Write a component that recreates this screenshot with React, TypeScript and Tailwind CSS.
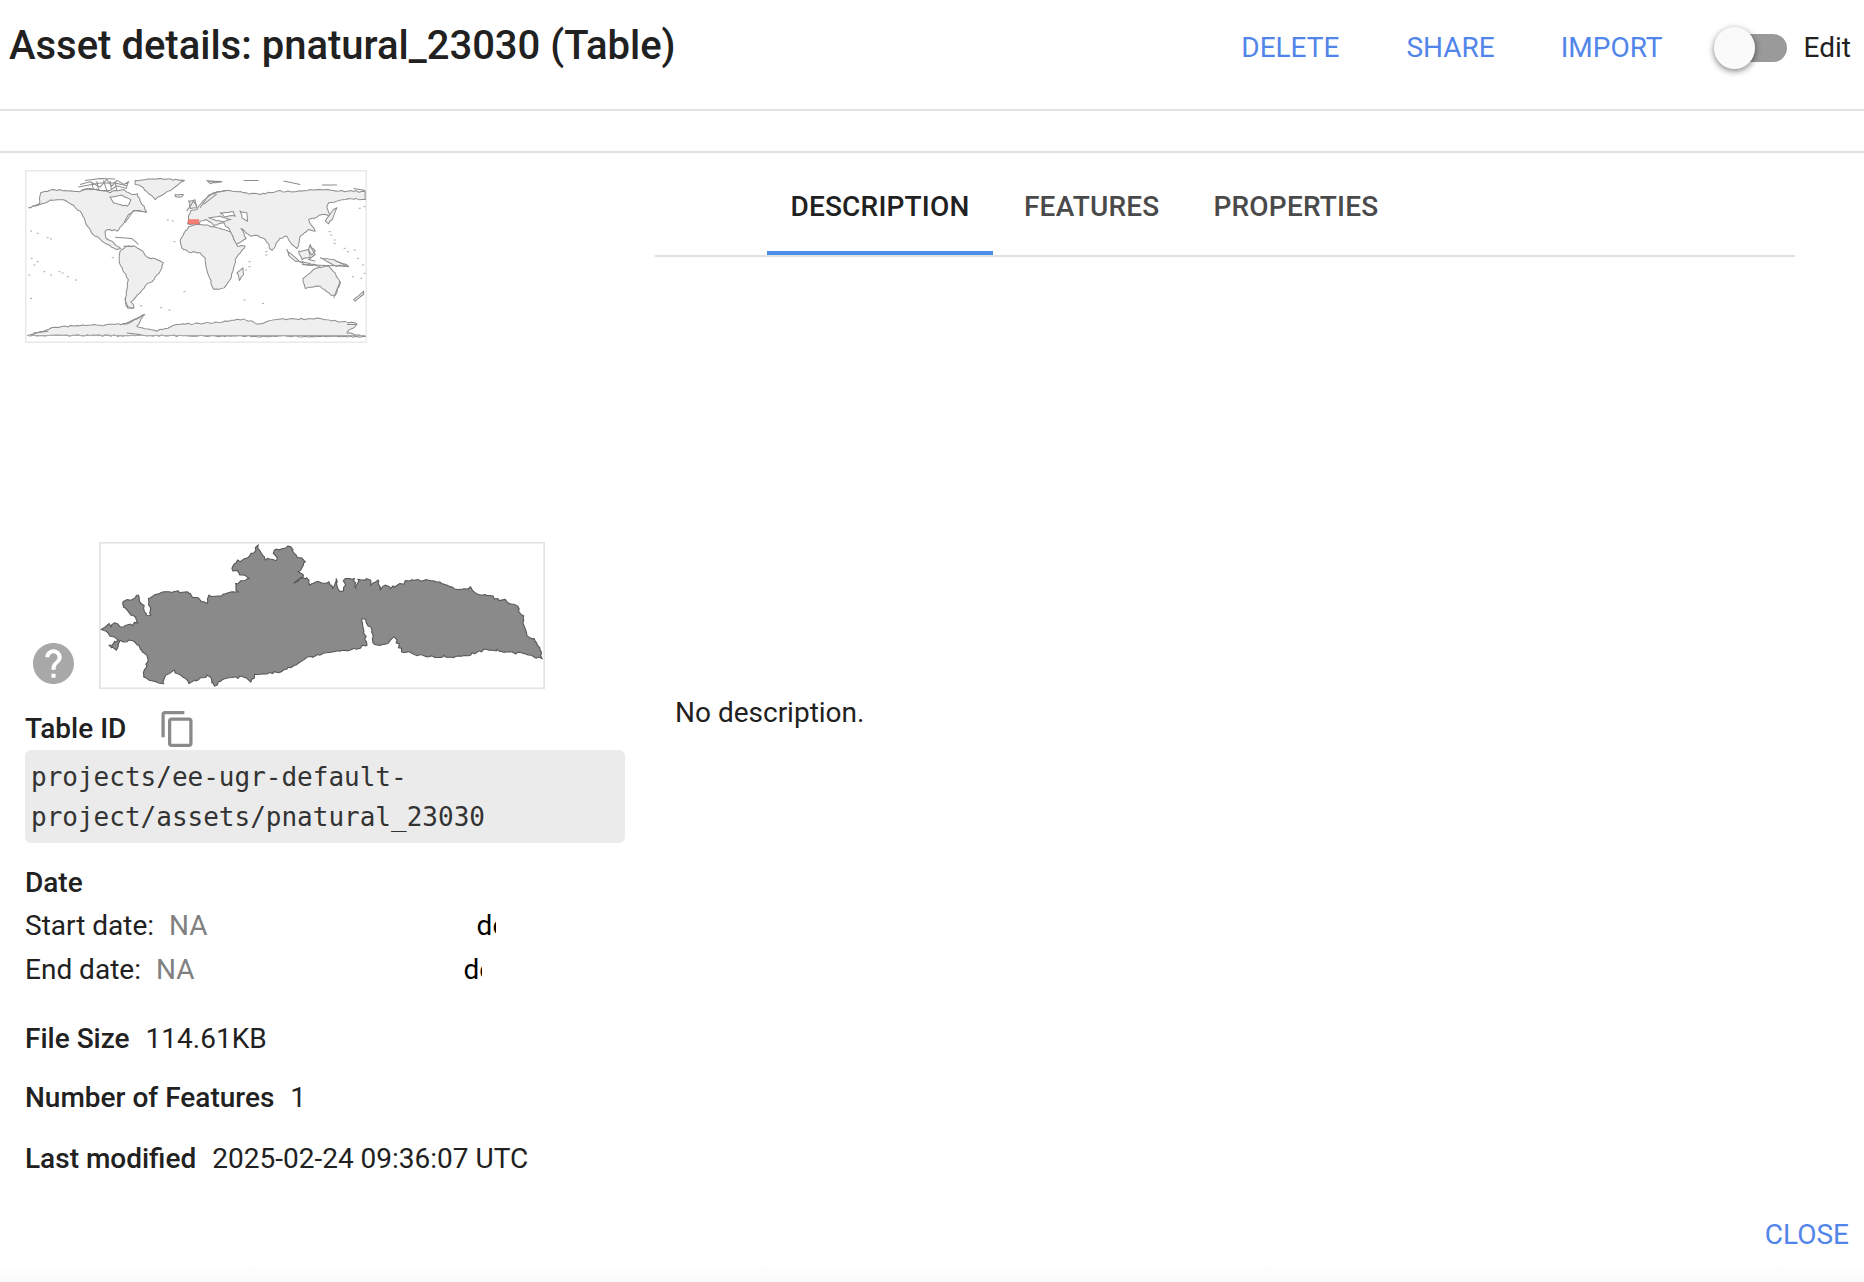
import React from 'react';

// outlines are traced by hand, roughen() adds the coastline wobble
function roughen(d: string, step: number, amp: number) {
  const nums = d.match(/-?\d+(\.\d+)?/g)!.map(Number);
  const pts: number[][] = [];
  for (let i = 0; i < nums.length; i += 2) pts.push([nums[i], nums[i + 1]]);
  let out = '';
  let n = 0;
  pts.forEach((p, i) => {
    const q = pts[(i + 1) % pts.length];
    const len = Math.hypot(q[0] - p[0], q[1] - p[1]);
    const parts = Math.max(1, Math.round(len / step));
    for (let k = 0; k < parts; k++) {
      n++;
      const t = k / parts;
      const off = k === 0 ? 0 : Math.sin(n * 12.9898) * 43758.5453;
      const r = off - Math.floor(off) - 0.5;
      const s = Math.sin(n * 78.233) * 12345.678;
      const r2 = s - Math.floor(s) - 0.5;
      const x = p[0] + (q[0] - p[0]) * t + (k === 0 ? 0 : r * amp);
      const y = p[1] + (q[1] - p[1]) * t + (k === 0 ? 0 : r2 * amp);
      out += `${n === 1 ? 'M' : 'L'}${x.toFixed(1)} ${y.toFixed(1)} `;
    }
  });
  return out + 'Z';
}

const land = [
  // north america
  'M85 170 L118 158 L122 125 L160 115 L205 120 L240 122 L262 112 L300 118 L330 125 L345 118 L372 116 L395 130 L412 128 L420 150 L432 165 L440 183 L408 178 L385 190 L372 215 L352 240 L330 235 L315 240 L318 262 L335 270 L362 292 L350 295 L322 280 L298 262 L278 250 L262 225 L240 180 L215 160 L190 146 L150 147 L125 158',
  // south america
  'M360 300 L378 286 L402 284 L420 295 L442 318 L470 325 L490 335 L478 365 L462 385 L435 405 L420 425 L405 440 L392 452 L402 470 L382 470 L375 445 L382 405 L385 385 L368 358 L358 335',
  // greenland
  'M405 88 L450 84 L500 84 L553 88 L535 100 L512 118 L490 130 L465 146 L445 128 L430 110 L405 100',
  // eurasia
  'M565 200 L572 178 L590 176 L602 158 L625 132 L650 122 L680 118 L730 125 L780 130 L830 120 L880 122 L930 115 L1000 118 L1095 122 L1095 145 L1045 142 L1010 150 L985 155 L980 170 L992 195 L965 190 L950 198 L925 205 L945 240 L925 235 L900 255 L890 292 L875 280 L860 255 L838 262 L815 298 L795 265 L765 252 L752 255 L722 232 L738 262 L705 280 L690 240 L672 215 L640 222 L618 205 L600 210 L598 218 L562 218',
  // africa
  'M540 270 L552 245 L566 226 L600 220 L640 226 L690 242 L712 285 L735 285 L705 325 L700 350 L688 388 L672 410 L640 414 L622 365 L615 320 L600 305 L565 302 L545 290',
  // australia
  'M908 382 L945 352 L965 348 L985 345 L998 360 L1020 395 L1005 432 L992 432 L960 405 L915 412',
  // antarctica
  'M82 552 L130 540 L165 528 L230 523 L300 522 L380 518 L432 490 L410 525 L470 540 L530 520 L640 515 L730 503 L778 518 L830 505 L960 502 L1070 518 L1040 545 L1095 556',
  // islands: madagascar, uk, iceland, japan, sumatra, borneo, new guinea, nz, novaya zemlya
  'M710 365 L728 350 L730 370 L718 388',
  'M565 150 L585 146 L590 170 L570 172',
  'M525 130 L550 130 L545 137 L525 136',
  'M975 210 L985 195 L1000 175 L1010 170 L1000 195 L985 218',
  'M860 295 L880 315 L905 335 L885 330 L865 312',
  'M895 300 L925 295 L930 318 L905 325',
  'M960 320 L1000 325 L1045 345 L1000 342',
  'M1060 445 L1090 420 L1090 430 L1065 450',
  'M620 88 L665 92 L630 98',
  'M930 280 L945 300 L935 312 L925 295',
  'M905 330 L960 345 L910 340',
];

// white holes: hudson bay, med, black sea, caspian
const water = [
  'M330 138 L365 132 L392 145 L382 165 L360 160 L340 155',
  'M625 200 L660 195 L690 205 L665 212 L640 205',
  'M660 185 L700 182 L705 195 L670 195',
  'M720 180 L740 185 L742 210 L725 200',
];

// canadian arctic and other small coast bits, drawn as open scribble
const arctic = [
  'M240 100 L270 92 L300 108 L320 85 L335 105 L350 88 L372 100 L385 92 L378 112 L350 104 L330 118 L300 118 L270 112 L245 118',
  'M235 108 L300 96 L345 96 L380 104',
  'M255 88 L300 82 L345 84',
  'M310 88 L320 118 M345 92 L350 118 M275 92 L280 115 M290 90 L296 118 M330 90 L334 116',
  'M625 90 L665 92 M730 88 L775 88 M850 90 L900 100 M965 102 L1010 102 M1060 112 L1095 118',
  'M560 180 L580 150 L590 165 M600 170 L620 140 L640 125 L680 118 M610 160 L650 128',
  'M930 285 L945 310 L925 325 L945 330 M905 340 L1040 345 M1010 330 L1045 348',
  'M375 440 L378 465 L400 472',
  'M345 258 L395 262 L415 280 M370 285 L400 285',
  'M375 215 L400 178 L440 183',
  'M100 545 L145 540 M370 520 L435 490 M380 545 L420 550 M1040 520 L1070 520',
  'M1020 390 L1000 440',
];

const islets = [
  [500, 205], [515, 208], [520, 270], [90, 238], [110, 245], [140, 258], [150, 262], [92, 320], [100, 340],
  [85, 370], [130, 360], [175, 360], [185, 364], [200, 375], [225, 385], [90, 440], [480, 468], [505, 475], [730, 445],
  [785, 455], [1055, 375], [1070, 320], [1000, 265], [1030, 290], [985, 240], [745, 330], [550, 420], [335, 318],
  [1000, 275], [1040, 300], [1060, 295], [1085, 340], [1090, 365], [1080, 380], [420, 462], [110, 330], [150, 370],
  [795, 310], [795, 300], [745, 345], [735, 355], [990, 250], [1075, 170], [1090, 165],
];

function WorldMap() {
  return (
    <svg viewBox="75 57 1025 518" className="w-[342px] h-[173px] block">
      <rect x="77" y="59" width="1021" height="514" fill="#fff" stroke="#eaeaea" strokeWidth="5" />
      <g fill="#efefef" stroke="#8c8c8c" strokeWidth="3" strokeLinejoin="round">
        {land.map((d, i) => (
          <path key={i} d={roughen(d, 9, 5)} />
        ))}
      </g>
      <g fill="#fff" stroke="#8c8c8c" strokeWidth="3">
        {water.map((d, i) => (
          <path key={i} d={roughen(d, 8, 4)} />
        ))}
      </g>
      <g fill="none" stroke="#8c8c8c" strokeWidth="3">
        {arctic.map((d, i) => (
          <path key={i} d={d} />
        ))}
      </g>
      <g fill="#aaa">
        {islets.map(([x, y], i) => (
          <rect key={i} x={x} y={y} width="6" height="3" />
        ))}
      </g>
      <rect x="565" y="206" width="31" height="12" fill="#f67f76" stroke="#f0645a" strokeWidth="2" />
      <path d="M82 553 H1095" stroke="#aaa" strokeWidth="3" />
    </svg>
  );
}

const regionOutline =
  'M278 328 L300 310 L305 320 L315 308 L330 320 L378 308 L372 290 L360 285 L340 262 L338 245 L360 240 L380 225 L395 265 L402 285 L415 285 L408 235 L450 215 L490 212 L520 220 L540 232 L570 250 L575 225 L600 228 L640 215 L655 215 L648 190 L685 175 L660 165 L638 145 L650 128 L685 110 L710 75 L730 120 L745 118 L760 122 L755 90 L785 85 L800 80 L815 105 L840 125 L820 155 L835 165 L808 190 L830 172 L850 180 L852 195 L870 185 L905 185 L915 205 L925 175 L932 210 L945 212 L950 175 L975 175 L980 205 L985 178 L1020 180 L1020 195 L1040 180 L1045 210 L1060 195 L1075 205 L1100 190 L1150 178 L1200 185 L1260 208 L1295 200 L1315 222 L1370 235 L1425 258 L1440 295 L1450 345 L1470 355 L1490 395 L1492 415 L1440 400 L1400 395 L1340 388 L1270 408 L1170 408 L1105 395 L1085 350 L1060 372 L1030 372 L1020 320 L997 295 L1000 325 L1010 375 L950 390 L880 405 L845 410 L810 435 L750 460 L700 462 L690 485 L670 470 L620 475 L590 497 L570 465 L520 490 L480 450 L455 465 L450 490 L395 470 L405 410 L370 365 L330 360 L320 390 L300 375 L325 360';

function RegionShape() {
  return (
    <svg viewBox="272 66 1228 440" preserveAspectRatio="none" className="w-[446px] h-[147px] block">
      <rect x="274" y="68" width="1224" height="436" fill="#fff" stroke="#e2e2e2" strokeWidth="5" />
      <path d={roughen(regionOutline, 8, 9)} fill="#8a8a8a" stroke="#555" strokeWidth="3" strokeLinejoin="miter" />
    </svg>
  );
}

export default function App() {
  return (
    <div className="w-[1864px] h-[1282px] flex flex-col bg-white font-['Roboto',sans-serif] text-[#212121] overflow-hidden">
      <div className="h-[111px] shrink-0 border-b-2 border-[#e3e3e3] flex justify-between pl-[9px] pr-[13px]">
        <h1 className="mt-[19px] text-[40px] leading-[54px] font-medium">Asset details: pnatural_23030 (Table)</h1>
        <div className="flex items-center h-[96px] text-[28px] text-[#5285ea]">
          <span>DELETE</span>
          <span className="ml-[67px]">SHARE</span>
          <span className="ml-[66px]">IMPORT</span>
          <div className="relative ml-[62px] w-[62px] h-[28px] rounded-full bg-[#9a9a9a]">
            <div className="absolute left-[-11px] top-[-7px] w-[41px] h-[42px] rounded-full bg-[#fafafa] shadow-[0_2px_6px_rgba(0,0,0,0.5)]" />
          </div>
          <span className="ml-[17px] text-[#212121]">Edit</span>
        </div>
      </div>
      <div className="h-[42px] shrink-0 border-b-2 border-[#e0e0e0]" />

      <div className="flex flex-1">
        <div className="w-[655px] shrink-0 pl-[25px] text-[28px]">
          <div className="mt-[17px]">
            <WorldMap />
          </div>
          <div className="mt-[199px] flex items-end">
            <svg viewBox="2 2 20 20" className="w-[41px] h-[41px] ml-[8px] mb-[5px] fill-[#a8a8a8]">
              <path d="M12 2C6.48 2 2 6.48 2 12s4.48 10 10 10 10-4.48 10-10S17.52 2 12 2zm1 17h-2v-2h2v2zm2.07-7.75l-.9.92C13.45 12.9 13 13.5 13 15h-2v-.5c0-1.1.45-2.1 1.17-2.83l1.24-1.26c.37-.36.59-.86.59-1.41 0-1.1-.9-2-2-2s-2 .9-2 2H8c0-2.21 1.79-4 4-4s4 1.79 4 4c0 .88-.36 1.68-.93 2.25z" />
            </svg>
            <div className="ml-[25px]">
              <RegionShape />
            </div>
          </div>
          <div className="mt-[20px] flex items-center h-[40px]">
            <span className="font-medium">Table ID</span>
            <svg viewBox="2 1 19 22" className="ml-[34px] w-[34px] h-[36px] fill-[#8a8a8a]">
              <path d="M16 1H4c-1.1 0-2 .9-2 2v14h2V3h12V1zm3 4H8c-1.1 0-2 .9-2 2v14c0 1.1.9 2 2 2h11c1.1 0 2-.9 2-2V7c0-1.1-.9-2-2-2zm0 16H8V7h11v14z" />
            </svg>
          </div>
          <div className="mt-[1px] w-[600px] h-[93px] rounded-[6px] bg-[#ebebeb] px-[6px] pt-[7px] font-['DejaVu_Sans_Mono',monospace] text-[26px] leading-[40px] text-[#333]">
            projects/ee-ugr-default-
            <br />
            project/assets/pnatural_23030
          </div>
          <div className="mt-[22px] font-medium leading-[36px]">Date</div>
          <div className="mt-[7px] flex h-[36px] items-center">
            <span>Start date:</span>
            <span className="ml-[15px] text-[#808080]">NA</span>
            <span className="ml-[269px] w-[19px] overflow-hidden text-black">de</span>
          </div>
          <div className="mt-[8px] flex h-[36px] items-center">
            <span>End date:</span>
            <span className="ml-[15px] text-[#808080]">NA</span>
            <span className="ml-[269px] w-[19px] overflow-hidden text-black">de</span>
          </div>
          <div className="mt-[33px] leading-[36px]">
            <span className="font-medium">File Size</span>
            <span className="ml-[16px]">114.61KB</span>
          </div>
          <div className="mt-[23px] leading-[36px]">
            <span className="font-medium">Number of Features</span>
            <span className="ml-[16px]">1</span>
          </div>
          <div className="mt-[25px] leading-[36px]">
            <span className="font-medium">Last modified</span>
            <span className="ml-[16px]">2025-02-24 09:36:07 UTC</span>
          </div>
        </div>

        <div className="flex-1 flex flex-col">
          <div className="mt-[3px] mr-[69px] h-[101px] border-b-2 border-[#e0e0e0] flex pl-[112px] text-[28px] font-medium tracking-[0.2px] text-[#4a4a4a]">
            <div className="w-[226px] h-[99px] pt-[6px] flex items-center justify-center border-b-[4px] border-[#4a90e8] text-[#212121]">DESCRIPTION</div>
            <div className="ml-[31px] pt-[3px] flex items-center h-[99px]">FEATURES</div>
            <div className="ml-[54px] pt-[3px] flex items-center h-[99px]">PROPERTIES</div>
          </div>
          <div className="mt-[438px] pl-[20px] text-[28px] leading-[36px]">No description.</div>
          <div className="mt-auto flex justify-end pr-[15px] pb-[8px] text-[28px] text-[#5285ea]">
            <span>CLOSE</span>
          </div>
        </div>
      </div>
      <div className="h-[18px] shrink-0 bg-gradient-to-b from-white to-[#fafafa]" />
    </div>
  );
}
